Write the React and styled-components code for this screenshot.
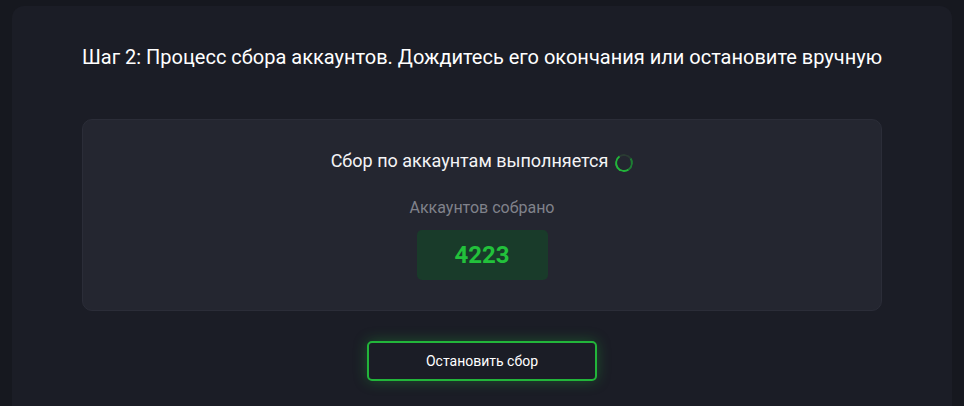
import React from 'react';
import styled, { createGlobalStyle } from 'styled-components';

const GlobalStyle = createGlobalStyle`
  html, body {
    margin: 0;
    padding: 0;
    background: #16181f;
    font-family: Roboto, "Noto Sans", Arial, sans-serif;
    overflow: hidden;
  }
`;

const Page = styled.div`
  padding: 6px 12px 0 12px;
  height: 406px;
  box-sizing: border-box;
  overflow: hidden;
`;

const Card = styled.div`
  background: #1b1d26;
  border-radius: 12px 12px 0 0;
  height: 400px;
  padding: 39px 70px 0;
  box-sizing: border-box;
  display: flex;
  flex-direction: column;
  align-items: center;
`;

const Title = styled.h2`
  margin: 0;
  font-size: 20px;
  font-weight: 400;
  line-height: 24px;
  color: #ffffff;
  text-align: center;
  white-space: nowrap;
`;

const Panel = styled.div`
  margin-top: 50px;
  width: 800px;
  box-sizing: border-box;
  background: #242630;
  border: 1px solid #2b2d38;
  border-radius: 10px;
  padding: 30px 0 30px;
  display: flex;
  flex-direction: column;
  align-items: center;
`;

const Status = styled.div`
  display: flex;
  align-items: center;
  gap: 7px;
  font-size: 18px;
  font-weight: 400;
  line-height: 22px;
  color: #f4f4f6;
`;

const Spinner = styled.span`
  width: 14px;
  height: 14px;
  border-radius: 50%;
  border: 2px solid #22b53a;
  border-top-color: #2a3b33;
  border-right-color: #1d7d33;
  transform: rotate(10deg);
  margin-top: 3px;
`;

const Label = styled.div`
  margin-top: 26px;
  font-size: 16px;
  line-height: 20px;
  color: #80828b;
`;

const Counter = styled.div`
  margin-top: 12px;
  width: 131px;
  height: 50px;
  border-radius: 5px;
  background: #193b2a;
  color: #22c13b;
  font-size: 24px;
  font-weight: 700;
  display: flex;
  align-items: center;
  justify-content: center;
`;

const StopButton = styled.button`
  margin-top: 30px;
  width: 230px;
  height: 40px;
  border: 2px solid #22b53a;
  border-radius: 5px;
  background: #1b1d26;
  color: #ffffff;
  font-family: inherit;
  font-size: 14px;
  cursor: pointer;
  box-shadow: 0 0 14px rgba(34, 181, 58, 0.35);
`;

export default function App() {
  return (
    <>
      <GlobalStyle />
      <Page>
        <Card>
          <Title>Шаг 2: Процесс сбора аккаунтов. Дождитесь его окончания или остановите вручную</Title>
          <Panel>
            <Status>
              Сбор по аккаунтам выполняется
              <Spinner />
            </Status>
            <Label>Аккаунтов собрано</Label>
            <Counter>4223</Counter>
          </Panel>
          <StopButton>Остановить сбор</StopButton>
        </Card>
      </Page>
    </>
  );
}
